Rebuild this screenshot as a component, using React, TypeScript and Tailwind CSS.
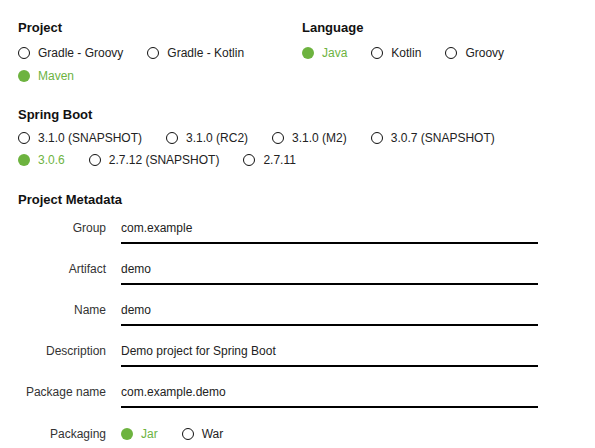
const GREEN = "text-[#6db33f]";

type Opt = { label: string; checked?: boolean };

const Radio = ({ label, checked, tall }: Opt & { tall?: boolean }) => (
  <div className={`flex items-center ${tall ? "h-[23px]" : "h-[22px]"}`}>
    {checked ? (
      <span className="w-[12px] h-[12px] rounded-full bg-[#6db33f]" />
    ) : (
      <span className="w-[12px] h-[12px] rounded-full border-[1.5px] border-[#111]" />
    )}
    <span className={`ml-[8px] text-[12px] ${checked ? GREEN : "text-[#222]"}`}>
      {label}
    </span>
  </div>
);

const RadioGroup = ({ options }: { options: Opt[] }) => (
  <div className="flex flex-wrap gap-x-[24px]">
    {options.map((o) => (
      <Radio key={o.label} label={o.label} checked={o.checked} tall />
    ))}
  </div>
);

const Heading = ({ children }: { children: string }) => (
  <h2 className="text-[13px] leading-4 font-bold text-[#111]">{children}</h2>
);

const Field = ({ label, value }: { label: string; value: string }) => (
  <div className="flex mt-[17px] first:mt-0">
    <div className="w-[88px] text-right text-[12px] leading-4 text-[#333]">
      {label}
    </div>
    <div className="ml-[15px] w-[417px] text-[12px] leading-4 text-[#222] pb-[6px] border-b-2 border-black">
      {value}
    </div>
  </div>
);

const App = () => {
  return (
    <div
      className="w-[595px] h-[448px] bg-white pl-[18px] pt-[20px] overflow-hidden"
      style={{ fontFamily: '"Liberation Sans", Arial, sans-serif' }}
    >
      {/* Project + Language */}
      <div className="flex">
        <section className="w-[284px]">
          <Heading>Project</Heading>
          <div className="mt-[5px]">
            <RadioGroup
              options={[
                { label: "Gradle - Groovy" },
                { label: "Gradle - Kotlin" },
                { label: "Maven", checked: true },
              ]}
            />
          </div>
        </section>
        <section>
          <Heading>Language</Heading>
          <div className="mt-[5px]">
            <RadioGroup
              options={[
                { label: "Java", checked: true },
                { label: "Kotlin" },
                { label: "Groovy" },
              ]}
            />
          </div>
        </section>
      </div>

      {/* Spring Boot */}
      <section className="mt-[20px] w-[500px]">
        <Heading>Spring Boot</Heading>
        <div className="mt-[4px]">
          <div className="flex gap-x-[24px]">
            <Radio label="3.1.0 (SNAPSHOT)" />
            <Radio label="3.1.0 (RC2)" />
            <Radio label="3.1.0 (M2)" />
            <Radio label="3.0.7 (SNAPSHOT)" />
          </div>
          <div className="flex gap-x-[24px]">
            <Radio label="3.0.6" checked />
            <Radio label="2.7.12 (SNAPSHOT)" />
            <Radio label="2.7.11" />
          </div>
        </div>
      </section>

      {/* Project Metadata */}
      <section className="mt-[21px]">
        <Heading>Project Metadata</Heading>
        <div className="mt-[12px]">
          <Field label="Group" value="com.example" />
          <Field label="Artifact" value="demo" />
          <Field label="Name" value="demo" />
          <Field label="Description" value="Demo project for Spring Boot" />
          <Field label="Package name" value="com.example.demo" />
        </div>
        <div className="flex items-center mt-[15px]">
          <div className="w-[88px] text-right text-[12px] leading-4 text-[#333]">
            Packaging
          </div>
          <div className="ml-[15px] flex gap-x-[24px]">
            <Radio label="Jar" checked />
            <Radio label="War" />
          </div>
        </div>
      </section>
    </div>
  );
};

export default App;
